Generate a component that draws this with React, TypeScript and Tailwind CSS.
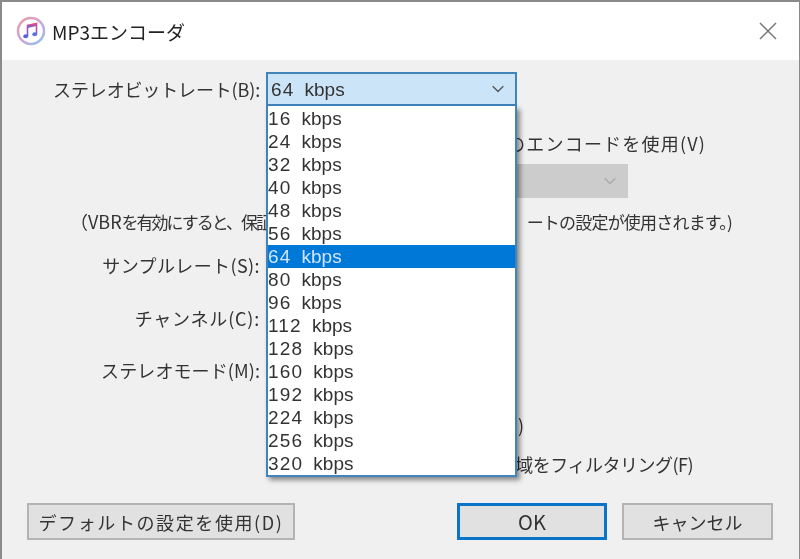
import { ChevronDown } from 'lucide-react'

const rates = ['16', '24', '32', '40', '48', '56', '64', '80', '96', '112', '128', '160', '192', '224', '256', '320']

function Rate({ value }: { value: string }) {
  return (
    <span className="flex items-baseline gap-[10px] text-[19px] font-['Liberation_Sans',sans-serif]">
      <span className="tracking-[1.2px]">{value}</span>
      <span>kbps</span>
    </span>
  )
}

function Label({ text, className }: { text: string; className: string }) {
  return <div className={`w-[258px] text-right ${className}`}>{text}</div>
}

function ItunesIcon() {
  return (
    <svg width="30" height="30" viewBox="0 0 30 30">
      <defs>
        <linearGradient id="ring" x1="0" y1="0" x2="1" y2="1">
          <stop offset="0" stopColor="#f59a9a" />
          <stop offset="0.5" stopColor="#c9a5dc" />
          <stop offset="1" stopColor="#8fc4ea" />
        </linearGradient>
        <linearGradient id="note" x1="0" y1="0" x2="0" y2="1">
          <stop offset="0" stopColor="#ee4b6a" />
          <stop offset="0.55" stopColor="#a054c8" />
          <stop offset="1" stopColor="#4a6fe0" />
        </linearGradient>
      </defs>
      <circle cx="15" cy="15" r="13" fill="#fff" stroke="url(#ring)" strokeWidth="2.5" />
      <path d="M11.5 20V9.5L20.5 7.5V18" fill="none" stroke="url(#note)" strokeWidth="1.6" />
      <path d="M11.5 9.5L20.5 7.5V10L11.5 12Z" fill="url(#note)" />
      <ellipse cx="9.7" cy="20.3" rx="2.4" ry="2" fill="#5a5fdc" />
      <ellipse cx="18.7" cy="18.3" rx="2.4" ry="2" fill="#5a6fe4" />
    </svg>
  )
}

export default function App() {
  return (
    <div className="w-[800px] h-[559px] flex flex-col overflow-hidden bg-[#f0f0f0] border-t-2 border-l-2 border-r border-[#8a8a8a] text-[18px] leading-none text-[#333] font-['Noto_Sans_CJK_JP','Noto_Sans',sans-serif] blur-[0.5px]">
      {/* Title bar */}
      <div className="h-[58px] shrink-0 bg-white flex items-center pl-[14px] pr-[21px]">
        <ItunesIcon />
        <span className="ml-[6px] text-[19px] text-[#222]">MP3エンコーダ</span>
        <svg className="ml-auto" width="20" height="20" viewBox="0 0 20 20">
          <path d="M2 2L18 18M18 2L2 18" stroke="#777" strokeWidth="1.5" fill="none" />
        </svg>
      </div>

      {/* Form */}
      <div className="flex-1 flex flex-col">
        <div className="h-[34px] mt-[12px] flex items-center">
          <Label text="ステレオビットレート(B):" className="tracking-[-0.15px]" />
          <div className="relative ml-[6px] w-[251px] h-[34px]">
            <div className="h-full flex items-center pl-[3px] pr-[7px] bg-[#cce4f7] border-2 border-[#3f84bd]">
              <Rate value="64" />
              <ChevronDown className="ml-auto w-[20px] h-[20px] text-[#555]" strokeWidth={1.5} />
            </div>
            {/* Open list */}
            <div className="absolute z-10 top-[34px] left-0 w-[251px] pt-px flex flex-col bg-white border-x-2 border-b-2 border-[#3f84bd] shadow-[3px_3px_5px_rgba(0,0,0,0.45)]">
              {rates.map((rate) => (
                <div
                  key={rate}
                  className={`h-[23px] shrink-0 flex items-center ${rate === '64' ? 'bg-[#0078d7] text-[#cfe6fb]' : ''}`}
                >
                  <Rate value={rate} />
                </div>
              ))}
            </div>
          </div>
        </div>

        <div className="h-[34px] mt-[20px] flex items-center justify-end pr-[93px]">
          <span className="tracking-[1.2px]">のエンコードを使用(V)</span>
        </div>

        <div className="h-[34px] mt-[4px] pl-[400px] flex">
          <div className="w-[226px] flex items-center justify-end pr-[8px] bg-[#cccccc]">
            <ChevronDown className="w-[20px] h-[20px] text-[#aaa]" strokeWidth={1.5} />
          </div>
        </div>

        <div className="h-[30px] mt-[8px] flex items-center justify-between pl-[68px] pr-[67px]">
          <span className="w-[196px] whitespace-nowrap">
            （VBR<span className="text-[17px] tracking-[-2px]">を有効にすると、保証</span>
          </span>
          <span className="text-[17px] tracking-[-0.8px]">ートの設定が使用されます。)</span>
        </div>

        <div className="h-[34px] mt-[12px] flex items-center">
          <Label text="サンプルレート(S):" className="tracking-[0.4px]" />
        </div>
        <div className="h-[34px] mt-[19px] flex items-center">
          <Label text="チャンネル(C):" className="tracking-[0.8px]" />
        </div>
        <div className="h-[34px] mt-[18px] flex items-center">
          <Label text="ステレオモード(M):" className="tracking-[0.1px]" />
        </div>

        <div className="h-[34px] mt-[21px] flex items-center justify-end pr-[275px]">
          <span>)</span>
        </div>
        <div className="h-[34px] mt-[5px] flex items-center justify-end pr-[106px]">
          <span className="tracking-[-0.5px]">域をフィルタリング(F)</span>
        </div>

        {/* Buttons */}
        <div className="mt-auto mb-[19px] flex items-center pl-[25px] pr-[26px]">
          <button className="w-[268px] h-[37px] bg-[#e1e1e1] border-2 border-[#b4b4b4] tracking-[1.6px]">デフォルトの設定を使用(D)</button>
          <button className="ml-auto w-[150px] h-[37px] bg-[#e1e1e1] border-[3px] border-[#0a74c9] text-[20px]">OK</button>
          <button className="ml-[15px] w-[151px] h-[37px] bg-[#e1e1e1] border-2 border-[#b4b4b4]">キャンセル</button>
        </div>
      </div>
    </div>
  )
}
